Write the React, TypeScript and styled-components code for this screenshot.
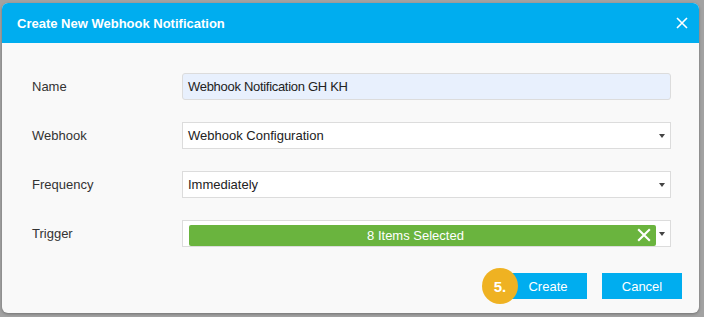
import styled, { createGlobalStyle } from 'styled-components';

const Global = createGlobalStyle`
  html, body {
    margin: 0;
    padding: 0;
    background: #a2a2a2;
    font-family: 'Liberation Sans', Arial, sans-serif;
  }
`;

const Page = styled.div`
  width: 704px;
  height: 317px;
  padding: 3px 0 0 2px;
  box-sizing: border-box;
`;

const Dialog = styled.div`
  width: 697px;
  height: 310px;
  background: #f9f9f9;
  border-radius: 6px;
  overflow: hidden;
  box-shadow: 0 1px 3px rgba(0, 0, 0, 0.3);
  display: flex;
  flex-direction: column;
`;

const Header = styled.div`
  height: 40px;
  flex-shrink: 0;
  background: #00adef;
  color: #fff;
  display: flex;
  align-items: center;
  justify-content: space-between;
  padding: 0 9px 0 15px;
`;

const Title = styled.h1`
  margin: 0;
  font-size: 13px;
  font-weight: bold;
`;

const CloseButton = styled.button`
  border: 0;
  background: none;
  padding: 0;
  width: 16px;
  height: 16px;
  display: flex;
  align-items: center;
  justify-content: center;
  cursor: pointer;
`;

const Form = styled.div`
  display: flex;
  flex-direction: column;
  gap: 22px;
  padding: 30px 28px 0 30px;
`;

const Row = styled.div`
  display: grid;
  grid-template-columns: 150px 1fr;
  align-items: center;
`;

const Label = styled.label`
  font-size: 13px;
  color: #333;
`;

const Field = styled.div<{ $filled?: boolean }>`
  height: 27px;
  box-sizing: border-box;
  border: 1px solid #dcdcdc;
  border-radius: ${({ $filled }) => ($filled ? '3px' : '0')};
  background: ${({ $filled }) => ($filled ? '#e8f0fd' : '#fff')};
  display: flex;
  align-items: center;
  padding: 0 3px 0 5px;
  font-size: 13px;
  color: #222;
`;

const Value = styled.span<{ $tight?: boolean }>`
  flex: 1;
  letter-spacing: ${({ $tight }) => ($tight ? '-0.3px' : '0')};
`;

const Arrow = styled.span`
  width: 0;
  height: 0;
  border-left: 3px solid transparent;
  border-right: 3px solid transparent;
  border-top: 4px solid #444;
  margin: 0 2px 0 3px;
`;

const Chip = styled.div`
  flex: 1;
  height: 21px;
  margin-top: 3px;
  margin-left: 1px;
  padding-right: 14px;
  background: #6ab43e;
  border-radius: 2px;
  color: #fff;
  display: flex;
  align-items: center;
  position: relative;
  justify-content: center;
`;

const ChipClear = styled.span`
  position: absolute;
  right: 5px;
  top: 3px;
  display: flex;
`;

const Footer = styled.div`
  margin-top: auto;
  display: flex;
  justify-content: flex-end;
  gap: 15px;
  padding: 0 17px 14px 0;
`;

const Button = styled.button<{ $width: number }>`
  position: relative;
  height: 26px;
  width: ${({ $width }) => $width}px;
  padding: 0;
  border: 0;
  background: #00adef;
  color: #fff;
  font-family: inherit;
  font-size: 13px;
`;

const Badge = styled.span`
  position: absolute;
  left: -27px;
  top: -5px;
  width: 36px;
  height: 36px;
  border-radius: 50%;
  background: #efb222;
  color: #fff;
  font-weight: bold;
  font-size: 15px;
  display: flex;
  align-items: center;
  justify-content: center;
`;

const Cross = ({ size, stroke }: { size: number; stroke: number }) => (
  <svg width={size} height={size} viewBox="0 0 12 12">
    <path d="M1 1 L11 11 M11 1 L1 11" stroke="#fff" strokeWidth={stroke} />
  </svg>
);

export default function App() {
  return (
    <Page>
      <Global />
      <Dialog>
        <Header>
          <Title>Create New Webhook Notification</Title>
          <CloseButton>
            <Cross size={12} stroke={1.6} />
          </CloseButton>
        </Header>
        <Form>
          <Row>
            <Label>Name</Label>
            <Field $filled>
              <Value $tight>Webhook Notification GH KH</Value>
            </Field>
          </Row>
          <Row>
            <Label>Webhook</Label>
            <Field>
              <Value>Webhook Configuration</Value>
              <Arrow />
            </Field>
          </Row>
          <Row>
            <Label>Frequency</Label>
            <Field>
              <Value>Immediately</Value>
              <Arrow />
            </Field>
          </Row>
          <Row>
            <Label>Trigger</Label>
            <Field>
              <Chip>
                8 Items Selected
                <ChipClear>
                  <Cross size={14} stroke={1.8} />
                </ChipClear>
              </Chip>
              <Arrow />
            </Field>
          </Row>
        </Form>
        <Footer>
          <Button $width={78}>
            <Badge>5.</Badge>
            Create
          </Button>
          <Button $width={80}>Cancel</Button>
        </Footer>
      </Dialog>
    </Page>
  );
}
